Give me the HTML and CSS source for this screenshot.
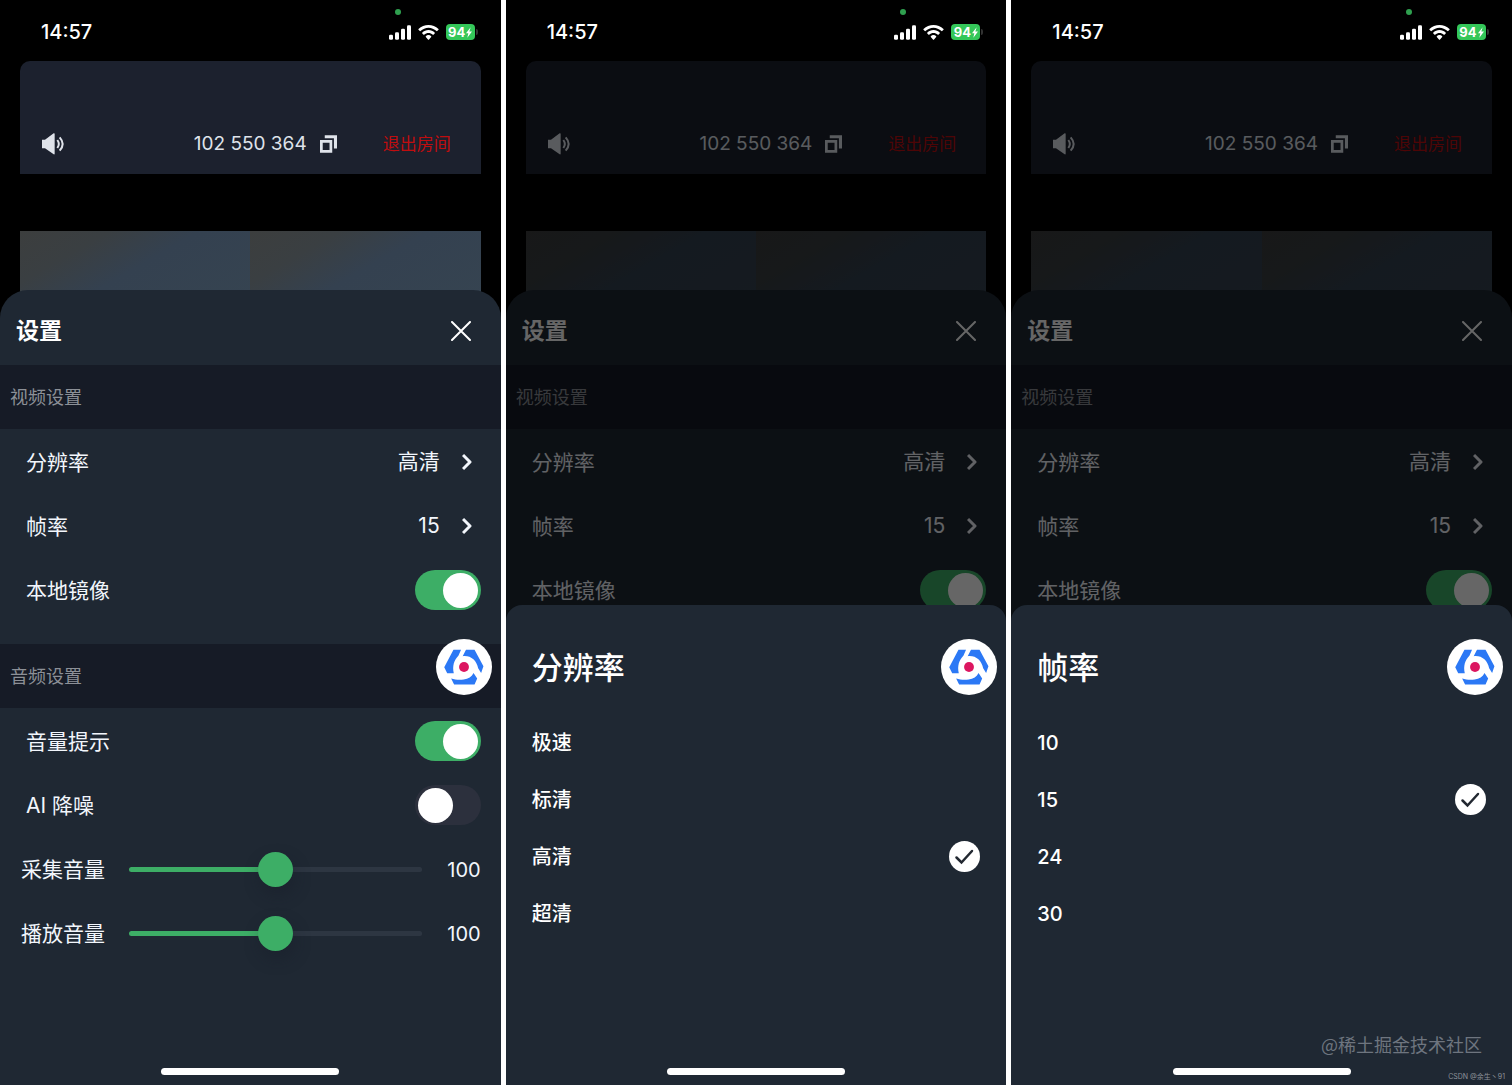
FILE: index.html
```html
<!DOCTYPE html>
<html lang="zh-CN">
<head>
<meta charset="utf-8">
<meta name="viewport" content="width=device-width, initial-scale=1">
<title>设置</title>
<link rel="stylesheet" href="styles.css">
</head>
<body>
<svg class="sprite" aria-hidden="true">
  <symbol id="i-signal" viewBox="0 0 66 44">
    <rect x="0" y="29" width="12" height="15" rx="4"/><rect x="18" y="21" width="12" height="23" rx="4"/><rect x="36" y="11" width="12" height="33" rx="4"/><rect x="54" y="0" width="12" height="44" rx="4"/>
  </symbol>
  <symbol id="i-wifi" viewBox="0 0 62 45">
    <path d="M31 0C42 0 53 4 61 12Q62 13 61 14L57 18Q56 19 55 18C48 12 40 8 31 8S14 12 7 18Q6 19 5 18L1 14Q0 13 1 12C9 4 20 0 31 0Z"/>
    <path d="M31 15C38 15 45 18 50 23Q51 24 50 25L46 29Q45 30 44 29C40 26 36 24 31 24S22 26 18 29Q17 30 16 29L12 25Q11 24 12 23C17 18 24 15 31 15Z"/>
    <path d="M31 30Q36 30 39 34Q40 35 39 36L32 44Q31 45 30 44L23 36Q22 35 23 34Q26 30 31 30Z"/>
  </symbol>
  <symbol id="i-bolt" viewBox="0 0 18 32"><path d="M14 0L0 18H7L4 32L18 13H10Z"/></symbol>
  <symbol id="i-speaker" viewBox="0 0 69 66">
    <path d="M0 20H9L35 1Q38 0 38 3V62Q38 65 35 64L9 46H0Z"/>
    <path d="M46 21Q55 33 46 45M53 13Q71 33 53 53" fill="none" stroke="currentColor" stroke-width="6"/>
  </symbol>
  <symbol id="i-copy" viewBox="0 0 50 52">
    <path fill-rule="evenodd" d="M0 14H36V52H0ZM8 22V44H28V22ZM14 0H50V39H41V9H14Z"/>
  </symbol>
  <symbol id="i-close" viewBox="0 0 20 20"><path d="M1 1L19 19M19 1L1 19" fill="none" stroke="currentColor" stroke-width="2" stroke-linecap="round"/></symbol>
  <symbol id="i-chevron" viewBox="0 0 10 18"><path d="M1 2L8 9L1 16" fill="none" stroke="currentColor" stroke-width="3" stroke-linejoin="round"/></symbol>
  <symbol id="i-logo" viewBox="0 0 170 170">
    <path fill="#2b78f5" d="M53 33H76L68 51C55 64 49 82 54 104H34L25 86ZM91 33H117L144 83L137 103L128 89C123 64 105 49 81 52ZM46 120C58 124 72 125 84 123C98 121 109 114 114 103L125 120L117 138H55Z"/>
    <circle cx="85" cy="85" r="15" fill="#dc1660"/>
  </symbol>
</svg>

<main class="board">
  <section class="phone">
    <div class="screen">
      <header class="status">
        <time class="clock">14:57</time>
        <div class="signals">
          <i class="dot"></i>
          <svg class="ic-signal"><use href="#i-signal"/></svg>
          <svg class="ic-wifi"><use href="#i-wifi"/></svg>
          <span class="battery">94<svg class="ic-bolt"><use href="#i-bolt"/></svg></span>
        </div>
      </header>
      <div class="room">
        <button class="icon-btn" aria-label="扬声器"><svg class="ic-speaker"><use href="#i-speaker"/></svg></button>
        <button class="room-id">102 550 364<svg class="ic-copy"><use href="#i-copy"/></svg></button>
        <button class="leave">退出房间</button>
      </div>
      <div class="videos"><div class="tile"></div><div class="tile"></div></div>
      <div class="sheet">
        <div class="sheet-head"><h1>设置</h1><button class="icon-btn" aria-label="关闭"><svg class="ic-close"><use href="#i-close"/></svg></button></div>
        <h2 class="band">视频设置</h2>
        <div class="list">
          <div class="row"><span>分辨率</span><button class="pick">高清<svg class="ic-chevron"><use href="#i-chevron"/></svg></button></div>
          <div class="row"><span>帧率</span><button class="pick">15<svg class="ic-chevron"><use href="#i-chevron"/></svg></button></div>
          <label class="row"><span>本地镜像</span><input class="switch" type="checkbox" checked></label>
        </div>
        <h2 class="band">音频设置</h2>
        <div class="list">
          <label class="row"><span>音量提示</span><input class="switch" type="checkbox" checked></label>
          <label class="row"><span>AI 降噪</span><input class="switch" type="checkbox"></label>
          <div class="row volume"><label for="capture">采集音量</label><input id="capture" class="slider" type="range" min="0" max="200" value="100"><output for="capture">100</output></div>
          <div class="row volume"><label for="playback">播放音量</label><input id="playback" class="slider" type="range" min="0" max="200" value="100"><output for="playback">100</output></div>
        </div>
      </div>
    </div>
    <button class="ball" aria-label="调试"><svg><use href="#i-logo"/></svg></button>
    <div class="home"></div>
  </section>

  <section class="phone">
    <div class="screen">
      <header class="status">
        <time class="clock">14:57</time>
        <div class="signals">
          <i class="dot"></i>
          <svg class="ic-signal"><use href="#i-signal"/></svg>
          <svg class="ic-wifi"><use href="#i-wifi"/></svg>
          <span class="battery">94<svg class="ic-bolt"><use href="#i-bolt"/></svg></span>
        </div>
      </header>
      <div class="room">
        <button class="icon-btn" aria-label="扬声器"><svg class="ic-speaker"><use href="#i-speaker"/></svg></button>
        <button class="room-id">102 550 364<svg class="ic-copy"><use href="#i-copy"/></svg></button>
        <button class="leave">退出房间</button>
      </div>
      <div class="videos"><div class="tile"></div><div class="tile"></div></div>
      <div class="sheet">
        <div class="sheet-head"><h1>设置</h1><button class="icon-btn" aria-label="关闭"><svg class="ic-close"><use href="#i-close"/></svg></button></div>
        <h2 class="band">视频设置</h2>
        <div class="list">
          <div class="row"><span>分辨率</span><button class="pick">高清<svg class="ic-chevron"><use href="#i-chevron"/></svg></button></div>
          <div class="row"><span>帧率</span><button class="pick">15<svg class="ic-chevron"><use href="#i-chevron"/></svg></button></div>
          <label class="row"><span>本地镜像</span><input class="switch" type="checkbox" checked></label>
        </div>
      </div>
    </div>
    <div class="scrim"></div>
    <fieldset class="picker">
      <legend>分辨率</legend>
      <label class="option"><span>极速</span><input type="radio" name="resolution"></label>
      <label class="option"><span>标清</span><input type="radio" name="resolution"></label>
      <label class="option"><span>高清</span><input type="radio" name="resolution" checked></label>
      <label class="option"><span>超清</span><input type="radio" name="resolution"></label>
    </fieldset>
    <button class="ball" aria-label="调试"><svg><use href="#i-logo"/></svg></button>
    <div class="home"></div>
  </section>

  <section class="phone">
    <div class="screen">
      <header class="status">
        <time class="clock">14:57</time>
        <div class="signals">
          <i class="dot"></i>
          <svg class="ic-signal"><use href="#i-signal"/></svg>
          <svg class="ic-wifi"><use href="#i-wifi"/></svg>
          <span class="battery">94<svg class="ic-bolt"><use href="#i-bolt"/></svg></span>
        </div>
      </header>
      <div class="room">
        <button class="icon-btn" aria-label="扬声器"><svg class="ic-speaker"><use href="#i-speaker"/></svg></button>
        <button class="room-id">102 550 364<svg class="ic-copy"><use href="#i-copy"/></svg></button>
        <button class="leave">退出房间</button>
      </div>
      <div class="videos"><div class="tile"></div><div class="tile"></div></div>
      <div class="sheet">
        <div class="sheet-head"><h1>设置</h1><button class="icon-btn" aria-label="关闭"><svg class="ic-close"><use href="#i-close"/></svg></button></div>
        <h2 class="band">视频设置</h2>
        <div class="list">
          <div class="row"><span>分辨率</span><button class="pick">高清<svg class="ic-chevron"><use href="#i-chevron"/></svg></button></div>
          <div class="row"><span>帧率</span><button class="pick">15<svg class="ic-chevron"><use href="#i-chevron"/></svg></button></div>
          <label class="row"><span>本地镜像</span><input class="switch" type="checkbox" checked></label>
        </div>
      </div>
    </div>
    <div class="scrim"></div>
    <fieldset class="picker">
      <legend>帧率</legend>
      <label class="option"><span>10</span><input type="radio" name="fps"></label>
      <label class="option"><span>15</span><input type="radio" name="fps" checked></label>
      <label class="option"><span>24</span><input type="radio" name="fps"></label>
      <label class="option"><span>30</span><input type="radio" name="fps"></label>
    </fieldset>
    <button class="ball" aria-label="调试"><svg><use href="#i-logo"/></svg></button>
    <div class="home"></div>
    <p class="mark">@稀土掘金技术社区</p>
    <p class="credit">CSDN @余生丶91</p>
  </section>
</main>
</body>
</html>
```

FILE: styles.css
```css
* { box-sizing: border-box; }

body {
  margin: 0;
  background: #fff;
  color: #f2f6fc;
  font-family: Inter, "Noto Sans CJK SC", sans-serif;
  font-size: 20px;
  line-height: 30px;
}

h1, h2, p { margin: 0; }

button {
  display: flex;
  align-items: center;
  padding: 0;
  border: 0;
  background: none;
  color: inherit;
  font: inherit;
}

svg { display: block; fill: currentColor; }
.sprite { position: absolute; width: 0; height: 0; }

.board {
  display: grid;
  grid-template-columns: repeat(3, 1fr);
  gap: 5px;
  min-height: 100vh;
}

/* Each phone stacks its screen, scrim and picker in one grid cell */
.phone {
  position: relative;
  display: grid;
  background: #000;
  overflow: hidden;
}
.screen, .scrim, .picker { grid-area: 1 / 1; }
.screen { display: flex; flex-direction: column; }
.scrim { background: rgba(0, 0, 0, .6); z-index: 1; }

/* Status bar */
.status {
  position: relative;
  z-index: 2;
  display: flex;
  justify-content: space-between;
  align-items: center;
  height: 61px;
  padding: 3px 23px 0 41px;
  color: #fff;
}
.clock { font-size: 20px; font-weight: 500; }
.signals { position: relative; display: flex; align-items: center; gap: 7px; }
.dot {
  position: absolute;
  left: 6px;
  top: -15px;
  width: 6px;
  height: 6px;
  border-radius: 50%;
  background: #2fa04f;
}
.ic-signal { width: 22px; height: 15px; }
.ic-wifi { width: 21px; height: 15px; }
.battery {
  position: relative;
  display: flex;
  align-items: center;
  justify-content: center;
  gap: 1px;
  width: 29px;
  height: 16px;
  margin-right: 3px;
  border-radius: 4px;
  background: #34c759;
  font-size: 13px;
  font-weight: 700;
  line-height: 16px;
}
.battery::after {
  content: "";
  position: absolute;
  right: -3px;
  top: 5px;
  width: 2px;
  height: 6px;
  border-radius: 0 2px 2px 0;
  background: #333;
}
.ic-bolt { width: 6px; height: 11px; }

/* Room header */
.room {
  display: flex;
  align-items: flex-end;
  height: 113px;
  margin: 0 20px;
  padding: 0 30px 15px 22px;
  border-radius: 10px 10px 0 0;
  background: #1c212e;
  color: #dfe3ea;
}
.room button { height: 30px; }
.ic-speaker { width: 23px; height: 22px; }
.room-id { gap: 13px; margin-left: auto; font-size: 19px; }
.ic-copy { width: 17px; height: 18px; }
.leave { margin-left: 46px; color: #c00d0f; font-size: 17px; }

.videos {
  display: grid;
  grid-template-columns: 1fr 1fr;
  height: 75px;
  margin: 57px 20px 0;
}
.tile { background: linear-gradient(150deg, #3c3e3e 0%, #3a3f42 25%, #344150 50%, #364451 100%); }

/* Settings sheet */
.sheet {
  position: relative;
  flex: 1;
  margin-top: -16px;
  border-radius: 28px 28px 0 0;
  background: #1f2833;
}
.sheet-head {
  display: flex;
  justify-content: space-between;
  align-items: center;
  height: 75px;
  padding: 6px 30px 0 16px;
  color: #fff;
}
.sheet-head h1 { font-size: 23px; font-weight: 700; }
.ic-close { width: 20px; height: 20px; }
.band {
  height: 64px;
  padding: 1px 10px 0;
  background: #161b26;
  color: #8c9097;
  font-size: 18px;
  font-weight: 400;
  line-height: 64px;
}
.list { padding: 1px 0 22px; }
.row {
  display: flex;
  justify-content: space-between;
  align-items: center;
  height: 64px;
  padding: 0 20px 0 26px;
}
.row span, .volume label { padding-top: 2px; font-size: 21px; }
.pick { gap: 22px; padding-right: 9px; font-size: 21px; }
.ic-chevron { width: 10px; height: 18px; }

.switch {
  display: flex;
  align-items: center;
  width: 66px;
  height: 40px;
  margin: 0;
  padding: 0 3px;
  border-radius: 20px;
  background: #2c303d;
  appearance: none;
}
.switch::before {
  content: "";
  width: 35px;
  height: 35px;
  border-radius: 50%;
  background: #fff;
}
.switch:checked { justify-content: flex-end; background: #3dae66; }

.volume { padding-left: 21px; }
.volume output { width: 59px; padding-top: 2px; text-align: right; }
.slider {
  flex: 1;
  min-width: 0;
  height: 35px;
  margin: 0 0 0 24px;
  background: none;
  appearance: none;
}
.slider::-webkit-slider-runnable-track {
  height: 5px;
  border-radius: 3px;
  background: linear-gradient(90deg, #3dae66 50%, #2d3642 50%);
}
.slider::-webkit-slider-thumb {
  width: 35px;
  height: 35px;
  margin-top: -15px;
  border-radius: 50%;
  background: #3dae66;
  box-shadow: 2px 8px 16px rgba(22, 27, 39, .4);
  appearance: none;
}

/* Option picker */
.picker {
  z-index: 2;
  align-self: end;
  min-width: 0;
  min-height: 480px;
  margin: 0;
  padding: 39px 26px 0;
  border: 0;
  border-radius: 16px 16px 0 0;
  background: #1f2833;
  color: #fff;
}
.picker legend {
  float: left;
  width: 100%;
  margin-bottom: 22px;
  padding: 0;
  font-size: 31px;
  font-weight: 500;
  line-height: 48px;
}
.option {
  clear: both;
  display: flex;
  justify-content: space-between;
  align-items: center;
  height: 57px;
  font-weight: 500;
}
.option input {
  width: 31px;
  height: 31px;
  margin: 0;
  border-radius: 50%;
  appearance: none;
}
.option input:checked {
  background: #fff url("data:image/svg+xml,%3Csvg xmlns='http://www.w3.org/2000/svg' viewBox='0 0 62 62'%3E%3Cpath d='M15 33l10 10L46 20' fill='none' stroke='%23222831' stroke-width='5' stroke-linecap='round'/%3E%3C/svg%3E");
}

/* Floating items */
.ball {
  position: absolute;
  z-index: 3;
  top: 639px;
  right: 9px;
  width: 56px;
  height: 56px;
  border-radius: 50%;
  background: #fff;
}
.ball svg { width: 56px; height: 56px; }
.home {
  position: absolute;
  z-index: 3;
  bottom: 10px;
  left: 50%;
  width: 178px;
  height: 7px;
  border-radius: 4px;
  background: #fff;
  transform: translateX(-50%);
}
.mark {
  position: absolute;
  z-index: 3;
  right: 30px;
  bottom: 26px;
  color: #6e757f;
  font-family: "Noto Sans CJK SC", sans-serif;
  font-size: 18px;
}
.credit {
  position: absolute;
  z-index: 3;
  right: 7px;
  bottom: 2px;
  color: #8c9299;
  font-size: 7px;
  line-height: 12px;
}
```
